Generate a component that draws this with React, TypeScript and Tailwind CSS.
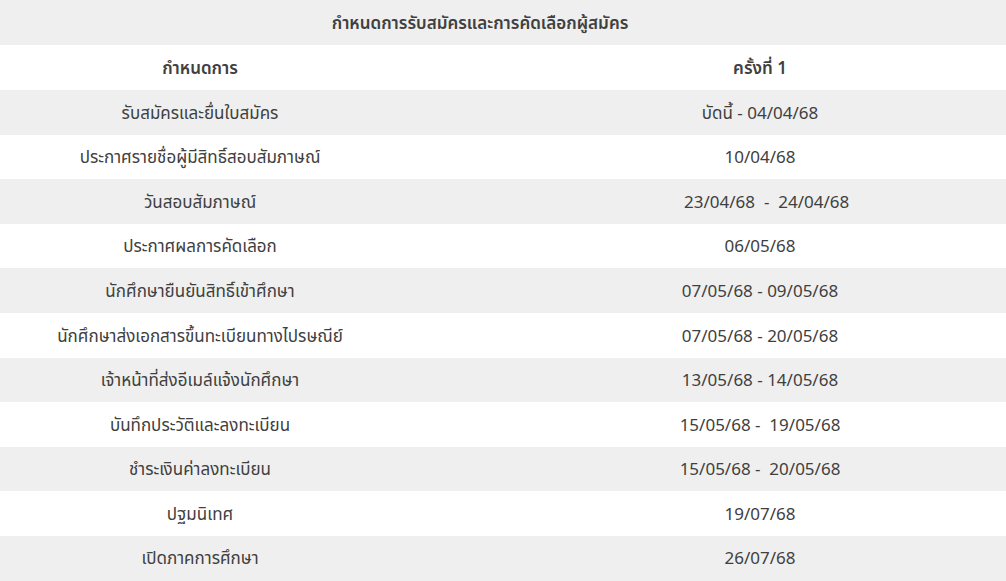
const rows: [string, string][] = [
  ['รับสมัครและยื่นใบสมัคร', 'บัดนี้ - 04/04/68'],
  ['ประกาศรายชื่อผู้มีสิทธิ์สอบสัมภาษณ์', '10/04/68'],
  ['วันสอบสัมภาษณ์', '\u00a0\u00a0 23/04/68 \u00a0- \u00a024/04/68'],
  ['ประกาศผลการคัดเลือก', '06/05/68'],
  ['นักศึกษายืนยันสิทธิ์เข้าศึกษา', '07/05/68 - 09/05/68'],
  ['นักศึกษาส่งเอกสารขึ้นทะเบียนทางไปรษณีย์', '07/05/68 - 20/05/68'],
  ['เจ้าหน้าที่ส่งอีเมล์แจ้งนักศึกษา', '13/05/68 - 14/05/68'],
  ['บันทึกประวัติและลงทะเบียน', '15/05/68 - \u00a019/05/68'],
  ['ชำระเงินค่าลงทะเบียน', '15/05/68 - \u00a020/05/68'],
  ['ปฐมนิเทศ', '19/07/68'],
  ['เปิดภาคการศึกษา', '26/07/68'],
]

export default function App() {
  return (
    <div
      className="w-[1006px] h-[581px] overflow-hidden bg-white text-[#404040] text-[17px]"
      style={{ fontFamily: '"Noto Sans", "Noto Sans Thai", "DejaVu Sans", sans-serif' }}
    >
      {/* title */}
      <div className="h-[45px] flex items-center justify-center pr-[46px] bg-[#efefef] font-semibold">
        กำหนดการรับสมัครและการคัดเลือกผู้สมัคร
      </div>

      {/* header */}
      <div className="h-[45px] flex items-center bg-white font-semibold">
        <div className="w-[400px] text-center">กำหนดการ</div>
        <div className="flex-1 text-center pl-[114px]">ครั้งที่ 1</div>
      </div>

      {rows.map(([label, date], i) => (
        <div
          key={label}
          className={`h-[44.6px] flex items-center ${i % 2 === 0 ? 'bg-[#efefef]' : 'bg-white'}`}
        >
          <div className="w-[400px] text-center">{label}</div>
          <div className="flex-1 text-center pl-[114px] whitespace-pre">{date}</div>
        </div>
      ))}
    </div>
  )
}
